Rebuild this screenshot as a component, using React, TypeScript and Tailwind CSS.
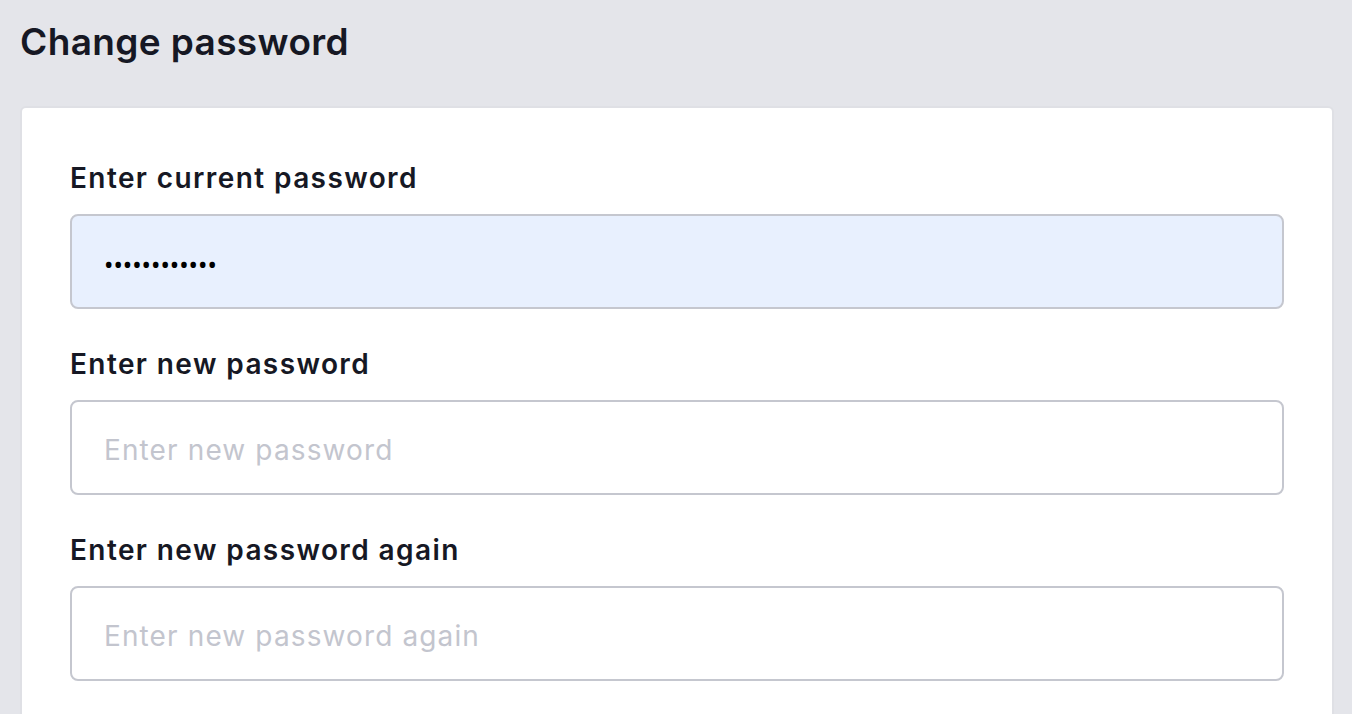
import { useState } from "react";

const FONT = { fontFamily: 'Inter, "Noto Sans", sans-serif' };

function Field({
  label,
  placeholder,
  value,
  autofilled,
}: {
  label: string;
  placeholder: string;
  value?: string;
  autofilled?: boolean;
}) {
  const [v, setV] = useState(value ?? "");
  return (
    <div className="flex flex-col">
      <label className="text-[28px] leading-[36px] font-semibold tracking-[0.05em] text-[#161824]">
        {label}
      </label>
      <input
        type="password"
        value={v}
        onChange={(e) => setV(e.target.value)}
        placeholder={placeholder}
        className={
          "mt-[18px] h-[95px] w-full rounded-[8px] border-2 border-[#c5c7cf] px-[32px] pt-[4px] text-[25px] text-black outline-none [font-family:'Noto_Sans',sans-serif] placeholder:text-[28px] placeholder:tracking-[0.04em] placeholder:text-[#c3c5ce] placeholder:[font-family:Inter,sans-serif] " +
          (autofilled ? "bg-[#e8f0fe]" : "bg-white")
        }
      />
    </div>
  );
}

export default function App() {
  return (
    <div className="min-h-screen bg-[#e4e5ea] px-[20px] pt-[16px]" style={FONT}>
      <h1 className="text-[37px] leading-[52px] font-semibold tracking-[0.01em] text-[#161824]">
        Change password
      </h1>
      <div className="mt-[38px] w-[1314px] rounded-t-[6px] border-2 border-b-0 border-[#dfe0e5] bg-white px-[48px] pt-[52px] pb-[40px]">
        <div className="flex flex-col gap-[37px]">
          <Field label="Enter current password" placeholder="Enter current password" value="abcdefghijkl" autofilled />
          <Field label="Enter new password" placeholder="Enter new password" />
          <Field label="Enter new password again" placeholder="Enter new password again" />
        </div>
      </div>
    </div>
  );
}
